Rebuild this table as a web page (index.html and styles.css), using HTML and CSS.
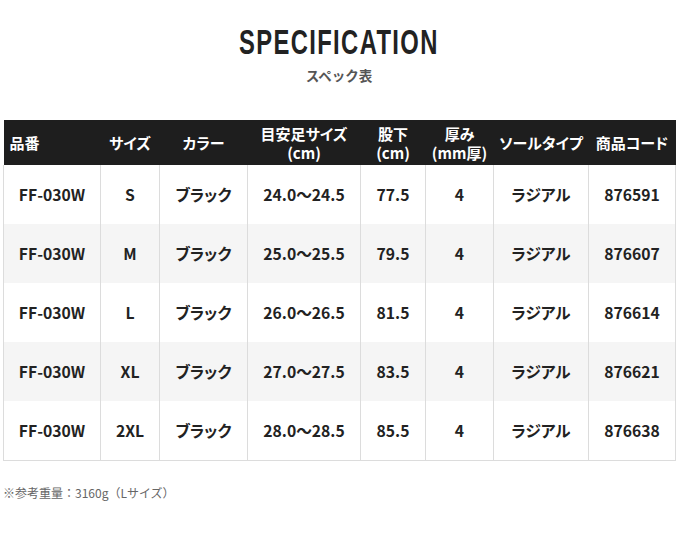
FILE: index.html
```html
<!DOCTYPE html>
<html lang="ja">
<head>
<meta charset="utf-8">
<link rel="stylesheet" href="styles.css">
</head>
<body>
<div class="page">
  <header class="heading">
    <h1 class="title"><span class="title-text">SPECIFICATION</span></h1>
    <p class="subtitle">スペック表</p>
  </header>
  <table class="spec">
    <colgroup>
      <col class="c1"><col class="c2"><col class="c3"><col class="c4">
      <col class="c5"><col class="c6"><col class="c7"><col class="c8">
    </colgroup>
    <thead>
      <tr>
        <th class="first">品番</th>
        <th>サイズ</th>
        <th>カラー</th>
        <th><span class="hl">目安足サイズ</span><span class="hl">(cm)</span></th>
        <th><span class="hl">股下</span><span class="hl">(cm)</span></th>
        <th><span class="hl">厚み</span><span class="hl">(mm厚)</span></th>
        <th>ソールタイプ</th>
        <th>商品コード</th>
      </tr>
    </thead>
    <tbody>
      <tr><td>FF-030W</td><td>S</td><td>ブラック</td><td>24.0～24.5</td><td>77.5</td><td>4</td><td>ラジアル</td><td>876591</td></tr>
      <tr><td>FF-030W</td><td>M</td><td>ブラック</td><td>25.0～25.5</td><td>79.5</td><td>4</td><td>ラジアル</td><td>876607</td></tr>
      <tr><td>FF-030W</td><td>L</td><td>ブラック</td><td>26.0～26.5</td><td>81.5</td><td>4</td><td>ラジアル</td><td>876614</td></tr>
      <tr><td>FF-030W</td><td>XL</td><td>ブラック</td><td>27.0～27.5</td><td>83.5</td><td>4</td><td>ラジアル</td><td>876621</td></tr>
      <tr><td>FF-030W</td><td>2XL</td><td>ブラック</td><td>28.0～28.5</td><td>85.5</td><td>4</td><td>ラジアル</td><td>876638</td></tr>
    </tbody>
  </table>
  <p class="note">※参考重量：3160g（Lサイズ）</p>
</div>
</body>
</html>
```
FILE: styles.css
```css
* { box-sizing: border-box; }
html, body { margin: 0; padding: 0; background: #fff; }
body {
  font-family: "Noto Sans CJK JP", sans-serif;
  color: #222;
}
.page {
  width: 680px;
  padding: 0 5px 0 3px;
}
.heading {
  text-align: center;
  padding-top: 22px;
  height: 120px;
}
.title {
  margin: 0;
  font-family: "Liberation Sans", sans-serif;
  font-weight: 700;
  font-size: 35px;
  line-height: 40px;
  color: #222;
}
.title-text {
  display: inline-block;
  letter-spacing: 2px;
  transform: scaleX(0.68);
}
.subtitle {
  margin: 4px 0 0;
  font-size: 13.5px;
  line-height: 18px;
  font-weight: 700;
  color: #555;
}
.spec {
  width: 672px;
  table-layout: fixed;
  border-collapse: collapse;
  font-feature-settings: "palt";
}
.c1 { width: 97px; }
.c2 { width: 59px; }
.c3 { width: 88px; }
.c4 { width: 113px; }
.c5 { width: 65px; }
.c6 { width: 68px; }
.c7 { width: 95px; }
.c8 { width: 87px; }
.spec thead tr { height: 45px; }
.spec th {
  background: #1e1e1e;
  color: #fff;
  font-size: 15px;
  line-height: 19px;
  font-weight: 700;
  padding: 0;
  text-align: center;
  vertical-align: middle;
  white-space: nowrap;
}
.spec th .hl { display: block; height: 19px; }
.spec th.first { text-align: left; padding-left: 6px; }
.spec tbody tr { height: 59px; }
.spec tbody tr:nth-child(even) { background: #f5f5f5; }
.spec td {
  font-size: 15.7px;
  font-weight: 700;
  color: #222;
  text-align: center;
  vertical-align: middle;
  padding: 0;
  border-left: 1px solid #dcdcdc;
  border-right: 1px solid #dcdcdc;
  white-space: nowrap;
}
.spec tbody tr:last-child td { border-bottom: 1px solid #dcdcdc; }
.note {
  margin: 23px 0 0;
  font-size: 12px;
  line-height: 18px;
  color: #666;
}
```
